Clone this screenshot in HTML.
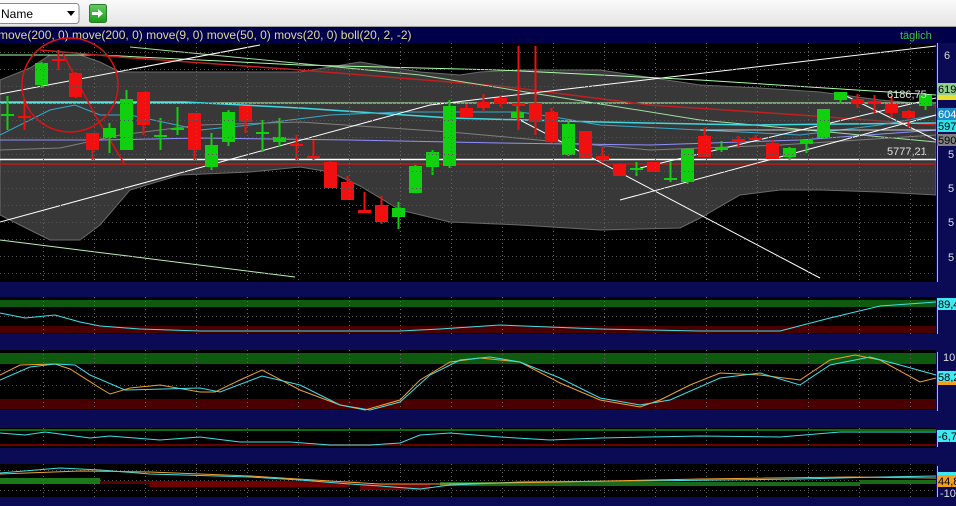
<!DOCTYPE html>
<html><head><meta charset="utf-8"><style>
html,body{margin:0;padding:0;width:956px;height:506px;overflow:hidden;background:#0a0a55;font-family:"Liberation Sans",sans-serif}
svg{display:block}
</style></head><body>
<svg id="s" width="956" height="506" xmlns="http://www.w3.org/2000/svg" font-family="Liberation Sans, sans-serif">
<defs>
<linearGradient id="tb" x1="0" y1="0" x2="0" y2="1"><stop offset="0" stop-color="#fafafa"/><stop offset="1" stop-color="#e4e4e4"/></linearGradient>
<linearGradient id="gb" x1="0" y1="0" x2="0" y2="1"><stop offset="0" stop-color="#6c6"/><stop offset="1" stop-color="#1a9a1a"/></linearGradient>
</defs>
<rect x="0" y="0" width="956" height="27" fill="url(#tb)"/>
<line x1="0" y1="26.5" x2="956" y2="26.5" stroke="#a0a0a0"/>
<rect x="-3" y="3.5" width="82" height="20" rx="3" fill="#fff" stroke="#8a8a8a"/>
<text x="1" y="18" font-size="12" fill="#000">Name</text>
<path d="M67 11h8l-4 5z" fill="#000"/>
<rect x="89.5" y="4.5" width="17" height="18" rx="2" fill="url(#gb)" stroke="#2a7a2a"/>
<path d="M92 12h6v-3l5 4.5l-5 4.5v-3h-6z" fill="#fff"/>
<rect x="0" y="27" width="956" height="16" fill="#00004a"/>
<text x="-2" y="39" font-size="12" fill="#e0d890">move(200, 0) move(200, 0) move(9, 0) move(50, 0) movs(20, 0) boll(20, 2, -2)</text>
<text x="900" y="39" font-size="11" fill="#3ec03e">täglich</text>
<rect x="0" y="43" width="936" height="239" fill="#000"/>
<g id="main"></g>
<rect x="936" y="43" width="20" height="239" fill="#0a0a55"/>
<line x1="937.5" y1="43" x2="937.5" y2="282" stroke="#c8b878"/>
<rect x="0" y="297" width="936" height="37" fill="#000"/>
<rect x="0" y="300" width="936" height="7" fill="#0e5a0e"/>
<rect x="0" y="326" width="936" height="7" fill="#4a0000"/>
<rect x="0" y="350" width="936" height="60" fill="#000"/>
<rect x="0" y="353" width="936" height="11" fill="#0e5a0e"/>
<rect x="0" y="399" width="936" height="10" fill="#4a0000"/>
<rect x="0" y="428" width="936" height="20" fill="#000"/>
<line x1="0" y1="430" x2="936" y2="430" stroke="#0e6a0e" stroke-width="2"/>
<line x1="0" y1="445" x2="936" y2="445" stroke="#6a0000" stroke-width="2"/>
<rect x="0" y="464" width="936" height="33" fill="#000"/>
<g id="grid"></g>
<g id="ind" fill="none"></g>
<g font-size="11">
<text x="944" y="59" fill="#ddd">6</text>
<rect x="937" y="83" width="19" height="12" fill="#8fd08f"/><text x="938" y="93" fill="#000">619</text>
<rect x="937" y="95" width="19" height="5" fill="#e8e030"/>
<rect x="937" y="108" width="19" height="12" fill="#1a8ac8"/><text x="938" y="118" fill="#fff">604</text>
<rect x="937" y="120" width="19" height="12" fill="#30e0e8"/><text x="938" y="130" fill="#000">597</text>
<rect x="937" y="134" width="19" height="12" fill="#808080"/><text x="938" y="144" fill="#000">590</text>
<text x="948" y="158" fill="#ddd">5</text>
<text x="948" y="192" fill="#ddd">5</text>
<text x="948" y="226" fill="#ddd">5</text>
<text x="948" y="261" fill="#ddd">5</text>
<line x1="937.5" y1="298" x2="937.5" y2="334" stroke="#c8b878"/>
<rect x="937" y="298" width="19" height="12" fill="#40e8f0"/><text x="938" y="308" fill="#000">89,4</text>
<line x1="937.5" y1="352" x2="937.5" y2="411" stroke="#c8b878"/>
<text x="943" y="361" fill="#ddd">10</text>
<rect x="937" y="371" width="19" height="11" fill="#40e8f0"/><text x="938" y="381" fill="#000">58,2</text>
<rect x="937" y="382" width="19" height="3" fill="#f0a020"/>
<line x1="937.5" y1="430" x2="937.5" y2="447" stroke="#c8b878"/>
<rect x="937" y="430" width="19" height="12" fill="#40e8f0"/><text x="938" y="440" fill="#000">-6,7</text>
<line x1="937.5" y1="466" x2="937.5" y2="497" stroke="#c8b878"/>
<rect x="937" y="472" width="19" height="3" fill="#40e8f0"/>
<rect x="937" y="475" width="19" height="12" fill="#f0a020"/><text x="938" y="485" fill="#000">44,8</text>
<text x="940" y="497" fill="#ddd">-10</text>
</g>
</svg>
<script>
var NS="http://www.w3.org/2000/svg";
function el(p,t,a){var e=document.createElementNS(NS,t);for(var k in a)e.setAttribute(k,a[k]);p.appendChild(e);return e;}
var m=document.getElementById("main"),g=document.getElementById("grid"),ind=document.getElementById("ind");
function pl(p,pts,c,w,extra){var a={points:pts,stroke:c,"stroke-width":w||1,fill:"none"};for(var k in extra)a[k]=extra[k];return el(p,"polyline",a);}
// bollinger band
var up=[[0,80],[30,68],[50,55],[80,55],[100,62],[120,72],[300,72],[360,62],[420,72],[460,75],[480,72],[520,70],[600,70],[700,85],[760,88],[820,92],[880,100],[936,105]];
var lo=[[936,195],[880,192],[820,190],[780,190],[740,195],[700,218],[680,228],[600,230],[520,225],[450,222],[400,210],[360,186],[330,172],[300,167],[250,172],[180,175],[130,190],[100,225],[80,240],[50,240],[20,225],[0,215]];
el(m,"polygon",{points:up.concat(lo).join(" "),fill:"#383838",stroke:"#6a6a6a"});
// grid
for(var x=43;x<936;x+=51){[[43,282],[297,334],[350,410],[428,448],[464,497]].forEach(function(r){el(g,"line",{x1:x+.5,y1:r[0],x2:x+.5,y2:r[1],stroke:"#666","stroke-dasharray":"1 3"});});}
for(var y=52;y<282;y+=17){el(g,"line",{x1:0,y1:y+.5,x2:936,y2:y+.5,stroke:"#555","stroke-dasharray":"1 3"});}
[316,370,385,470,480,490].forEach(function(y){el(g,"line",{x1:0,y1:y+.5,x2:936,y2:y+.5,stroke:"#555","stroke-dasharray":"1 3"});});
// lines
pl(m,"0,55 100,55 300,65 500,70 700,80 936,95","#aaffaa",1);
pl(m,"40,50 300,60 500,90 700,105 936,110","#b0b0ff",1,{opacity:.0});
pl(m,"0,103 936,103","#c0ffc0",1);
pl(m,"40,50 120,57 300,70 500,86 650,105 800,115 936,125","#c02020",1.5);
pl(m,"130,47 420,75 700,120 936,142","#a0e0a0",1);
pl(m,"0,102 185,102 300,108 450,118 600,122 750,125 936,123","#40d8e0",1.5);
pl(m,"0,135 50,110 75,105 100,115 130,115 200,130 250,125 330,115 400,112 450,112 520,112 560,118 600,125 700,130 800,135 880,125 936,115","#3aa8c8",1);
pl(m,"0,140 100,140 200,138 350,140 500,143 650,145 800,140 936,130","#9090ff",1);
pl(m,"0,150 60,148 120,135 200,125 300,122 450,132 650,150 780,145 936,135","#808080",1);
pl(m,"0,159.5 936,159.5","#fff",1.5);pl(m,"0,164 936,164","#c01818",1.5);
pl(m,"0,94 260,45","#fff",1);pl(m,"0,222 430,105 936,46","#fff",1);
pl(m,"0,240 295,277","#b8f0b8",1);
pl(m,"520,120 820,278","#fff",1);pl(m,"620,200 936,115","#fff",1);pl(m,"640,168 936,98","#fff",1);
pl(m,"840,93 936,140","#fff",1);pl(m,"700,130 936,130","#fff",.8);
el(m,"ellipse",{cx:70,cy:85,rx:48,ry:47,stroke:"#e01010","stroke-width":1.5,fill:"none"});
pl(m,"62,52 95,115 125,165","#e01010",1.5);
// candles [x,o,c,h,l]
var C=[[7,114,116,96,130,'g'],[24,116,118,100,130,'r'],[41,63,85,62,88,'g'],[58,59,61,50,70,'r'],[75,73,97,72,98,'r'],[92,133,150,133,160,'r'],[109,128,138,123,153,'g'],[126,99,150,90,150,'g'],[143,92,125,92,135,'r'],[160,135,137,118,150,'g'],[177,128,130,107,135,'g'],[194,113,150,113,160,'r'],[211,145,167,133,170,'g'],[228,112,142,110,146,'g'],[245,106,122,106,133,'r'],[262,132,134,120,152,'g'],[279,137,142,118,147,'g'],[296,144,146,135,160,'r'],[313,156,158,140,160,'r'],[330,162,188,161,188,'r'],[347,182,200,176,200,'r'],[364,210,213,192,213,'r'],[381,205,222,196,224,'r'],[398,208,217,202,229,'g'],[415,166,193,165,193,'g'],[432,152,167,150,175,'g'],[449,106,166,100,168,'g'],[466,108,117,104,118,'r'],[483,102,108,94,112,'r'],[500,98,104,95,107,'r'],[517,112,118,105,120,'g'],[518,103,106,46,130,'r'],[535,103,122,46,135,'r'],[551,112,142,108,143,'r'],[568,124,155,121,156,'g'],[585,131,158,131,158,'r'],[602,156,160,147,163,'r'],[619,164,176,163,176,'r'],[636,168,170,162,176,'g'],[653,162,172,162,172,'r'],[670,178,180,162,182,'g'],[687,149,182,148,184,'g'],[704,136,157,128,157,'r'],[721,147,150,141,152,'g'],[738,139,142,136,148,'r'],[755,138,140,135,140,'r'],[772,143,159,140,159,'r'],[789,148,157,147,160,'g'],[806,140,144,140,153,'g'],[823,109,138,109,139,'g'],[840,92,100,92,103,'g'],[857,99,104,94,108,'r'],[874,101,104,95,113,'r'],[891,104,113,96,118,'r'],[908,111,118,110,127,'r'],[925,95,106,93,110,'g']];
C.forEach(function(c){var col=c[5]=='g'?'#10d010':'#f01010';el(m,"line",{x1:c[0]+.5,y1:c[3],x2:c[0]+.5,y2:c[4],stroke:col,"stroke-width":2});el(m,"rect",{x:c[0]-6,y:c[1],width:13,height:Math.max(2,c[2]-c[1]),fill:col});});
el(m,"text",{x:887,y:98,"font-size":"11",fill:"#e0e0e0"}).textContent="6186,75";
el(m,"text",{x:887,y:155,"font-size":"11",fill:"#e0e0e0"}).textContent="5777,21";
// indicators
pl(ind,"0,313 25,318 55,315 80,322 100,326 140,329 200,331 300,331 400,331 440,329 500,325 600,329 700,331 780,331 830,318 880,306 936,302","#40e0e8",1);
pl(ind,"0,375 20,365 55,364 70,369 100,388 110,394 130,388 160,385 200,392 215,392 240,380 262,370 300,390 340,405 365,410 400,400 420,380 450,362 480,358 520,362 560,383 600,400 640,407 660,400 690,385 720,373 760,375 800,380 830,360 855,355 880,360 920,382 936,378","#f0a030",1);
pl(ind,"0,380 30,367 55,364 75,365 90,375 125,390 200,388 220,392 262,376 300,385 340,405 370,410 400,402 430,375 460,360 490,357 520,362 560,378 600,398 640,405 670,400 720,378 760,373 800,385 830,365 870,357 900,365 936,375","#40e0e8",1);
pl(ind,"0,433 25,435 45,432 90,438 110,436 160,440 200,437 240,442 290,442 330,445 370,445 400,443 420,435 450,433 500,437 550,440 600,438 700,436 780,437 840,432 900,432 936,432","#40e0e8",1);
el(ind,"polygon",{points:"0,480 100,479 100,481 0,483","fill":"#0a7a0a"});
el(ind,"rect",{x:0,y:478,width:100,height:6,fill:"#1a7a1a"});
el(ind,"rect",{x:100,y:481,width:260,height:3,fill:"#5a0000"});
el(ind,"rect",{x:150,y:481,width:200,height:6,fill:"#700000"});
el(ind,"rect",{x:360,y:484,width:70,height:6,fill:"#700000"});
el(ind,"rect",{x:440,y:482,width:420,height:4,fill:"#1a6a1a"});
el(ind,"rect",{x:860,y:480,width:76,height:4,fill:"#1a6a1a"});
pl(ind,"0,473 60,468 100,470 150,474 250,477 300,480 350,484 380,486 420,489 450,485 520,482 640,481 720,480 800,479 880,477 936,476","#40e0e8",1);
pl(ind,"0,474 80,471 150,472 250,476 330,481 380,484 440,484 560,482 700,479 850,477 936,478","#f0a030",1);
</script>
</body></html>
